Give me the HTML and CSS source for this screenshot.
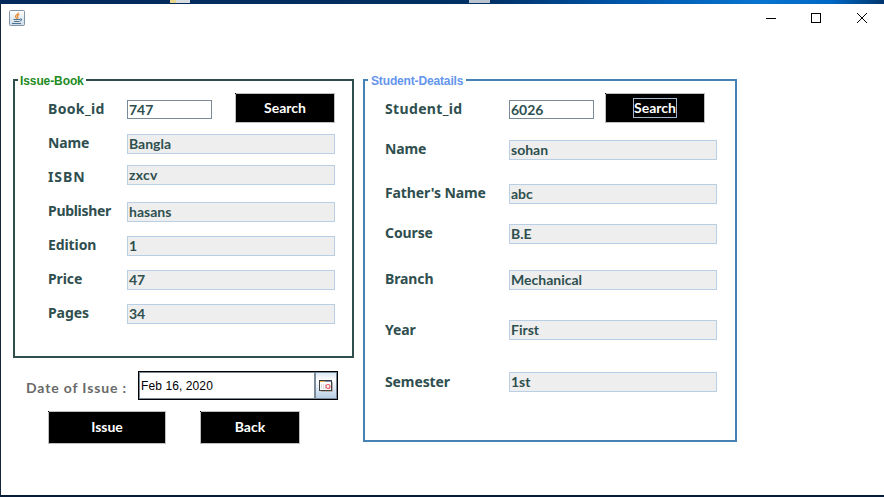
FILE: index.html
```html
<!DOCTYPE html>
<html lang="en">
<head>
<meta charset="utf-8">
<title>Issue Book</title>
<link rel="stylesheet" href="styles.css">
</head>
<body>
<div class="desktop"><i class="folder"></i><i class="drive"></i></div>
<div class="window">
  <header class="titlebar">
    <svg class="java" width="16" height="16" viewBox="0 0 16 16">
      <defs><linearGradient id="tile" x2="0" y2="1"><stop offset="0" stop-color="#fff"/><stop offset="1" stop-color="#cbdbe8"/></linearGradient></defs>
      <rect x=".5" y=".5" width="15" height="15" rx="1" fill="url(#tile)" stroke="#8295a5"/>
      <path d="M9.500 2.500C10 4 6 5 6.500 6.500S8 8 7.500 9M10.500 4.500C8 5.500 8 6.300 9 7.300L8.500 8.500" fill="none" stroke="#e98a2e" stroke-width="1.200"/>
      <path d="M4.500 9.500H11M5 11.500H10.500M3 13.500H12M11 9q2.500-.5 1.500 1.200L11 11" fill="none" stroke="#51738f"/>
    </svg>
    <svg class="controls" width="104" height="12" viewBox="0 0 104 12" fill="none" stroke="#000">
      <path d="M1 6.500H11"/><rect x="46.500" y="1.500" width="9" height="9"/><path d="M92 1L102 11M102 1L92 11"/>
    </svg>
  </header>
  <main class="content">
    <div class="left">
      <section class="panel issue">
        <h2 class="legend">Issue-Book</h2>
        <div class="row"><label class="wide">Book_id</label><span class="field edit">747</span><button class="btn">Search</button></div>
        <div class="row"><label>Name</label><span class="field">Bangla</span></div>
        <div class="row"><label class="wider">ISBN</label><span class="field raised">zxcv</span></div>
        <div class="row"><label class="tight">Publisher</label><span class="field">hasans</span></div>
        <div class="row"><label>Edition</label><span class="field">1</span></div>
        <div class="row"><label>Price</label><span class="field">47</span></div>
        <div class="row"><label>Pages</label><span class="field">34</span></div>
      </section>
      <div class="date-row">
        <span class="date-label">Date of Issue :</span>
        <div class="date"><span class="date-text">Feb 16, 2020</span><span class="date-button">
          <svg width="14" height="12" viewBox="0 0 14 12"><path d="M2 11.500H13.500V2" fill="none" stroke="#b9b5ad"/><rect x=".5" y=".5" width="12" height="10" fill="#fff" stroke="#404040"/><path d="M1 1.500H6" stroke="#f0b050"/><path d="M6 1.500H12" stroke="#7890b8"/><path d="M2.500 4V9M4.500 4V9M6.500 4V9" stroke="#ddd"/><circle cx="9" cy="6.500" r="2" fill="#fff" stroke="#e85a60" stroke-width="1.200"/></svg>
        </span></div>
      </div>
      <div class="actions"><button class="btn go">Issue</button><button class="btn back">Back</button></div>
    </div>
    <section class="panel student">
      <h2 class="legend">Student-Deatails</h2>
      <div class="row"><label class="wide">Student_id</label><span class="field edit">6026</span><button class="btn"><span class="focus">Search</span></button></div>
      <div class="row name"><label>Name</label><span class="field">sohan</span></div>
      <div class="row father"><label>Father's Name</label><span class="field">abc</span></div>
      <div class="row course"><label>Course</label><span class="field">B.E</span></div>
      <div class="row branch"><label>Branch</label><span class="field">Mechanical</span></div>
      <div class="row year"><label>Year</label><span class="field">First</span></div>
      <div class="row semester"><label>Semester</label><span class="field">1st</span></div>
    </section>
  </main>
</div>
</body>
</html>
```
FILE: styles.css
```css
* { box-sizing: border-box; }
body { margin: 0; width: 884px; height: 497px; overflow: hidden; background: #fff; font-family: "Noto Sans", sans-serif; }
.desktop { height: 4px; display: flex; background: linear-gradient(90deg, #00285a, #003064 55%, #0055a8 70%, #0874d0 86%, #0068c4 94%, #00366e); }
.folder { width: 20px; height: 3px; margin-left: 170px; background: linear-gradient(90deg, #e8d68c 30%, #d8dce0 30%); }
.drive { width: 21px; height: 3px; margin-left: 279px; background: #b8c4d0; }
.window { height: 493px; border-left: 1px solid #14243a; border-bottom: 2px solid #061c38; background: #fff; }
.titlebar { height: 28px; padding: 6px 11px 0 8px; display: flex; justify-content: space-between; }
.controls { margin-top: 2px; margin-right: 4px; }
.java { flex: none; }
.content { display: flex; align-items: flex-start; gap: 9px; padding: 47px 0 0 12px; }
.left { width: 341px; }
.panel { position: relative; border: 2px solid #2f4f4f; }
.issue { height: 279px; padding: 11px 0 0 33px; }
.student { width: 374px; height: 363px; padding: 11px 0 0 20px; border-color: #4682b4; }
.legend { position: absolute; top: -8px; left: 3px; margin: 0; padding: 0 2px; background: #fff; color: #228b22; font: bold 12px/16px "Liberation Sans", sans-serif; letter-spacing: -.1px; white-space: nowrap; }
.student .legend { padding: 0 3px; color: #6495ed; letter-spacing: -.15px; }
.row { height: 34px; display: flex; align-items: center; }
.row label { flex: none; width: 79px; color: #2f4f4f; font-size: 14px; line-height: 20px; font-weight: 700; letter-spacing: -.1px; white-space: nowrap; }
.row .wide { letter-spacing: .35px; }
.row .wider { letter-spacing: .9px; }
.row .tight { letter-spacing: -.3px; }
.student .row label { width: 124px; }
.field { width: 208px; height: 20px; margin-top: 2px; padding-left: 1px; border: 1px solid #b8cfe5; background: #eee; color: #2f4f4f; font: 700 14px/17px Lato, sans-serif; }
.field.raised { margin-top: -4px; line-height: 18px; letter-spacing: .25px; }
.field.edit { width: 85px; height: 19px; margin-top: 1px; border-color: #7a8a99; background: #fff; line-height: 18px; }
.btn { position: relative; width: 100px; height: 30px; padding: 0; border: 1px solid #bfbfbf; border-radius: 0; background: #000; color: #fff; font: 700 14px/18px Lato, sans-serif; }
.btn::before { content: ""; position: absolute; top: -1px; left: -1px; width: 1px; height: 1px; background: #000; }
.row .btn { margin: 0 0 2px 23px; }
.student .row .btn { margin-left: 11px; }
.focus { display: inline-block; height: 20px; border: 1px solid #a3b8cc; }
.student .name, .student .father, .student .course, .student .branch, .student .year, .student .semester { height: 20px; }
.name .field, .father .field, .course .field, .branch .field, .year .field, .semester .field { margin-top: 0; }
.student .name label, .father label, .course label, .branch label { margin-bottom: 2px; }
.student .name { margin-top: 14px; }
.father { margin-top: 24px; }
.course { margin-top: 20px; }
.branch { margin-top: 26px; }
.year { margin-top: 30px; }
.semester { margin-top: 32px; }
.date-row { display: flex; margin-top: 13px; padding-left: 13px; }
.date-label { width: 112px; padding-top: 7px; color: #696969; font: 700 14px/20px Lato, sans-serif; letter-spacing: .85px; white-space: nowrap; }
.date { width: 200px; height: 29px; display: flex; border: 1px solid #000; background: #fff; }
.date-text { width: 176px; height: 27px; padding-left: 1px; border: 1px solid #7a8a99; font: 12px/27px "Liberation Sans", sans-serif; letter-spacing: .1px; }
.date-button { width: 22px; display: flex; align-items: center; justify-content: center; border: 1px solid #7a8a99; background: linear-gradient(#dde8f3, #fff 30%, #b8cfe5); }
.actions { display: flex; gap: 34px; margin: 11px 0 0 35px; }
.go { width: 118px; height: 33px; padding-bottom: 2px; }
.back { height: 33px; padding-bottom: 2px; }
```
